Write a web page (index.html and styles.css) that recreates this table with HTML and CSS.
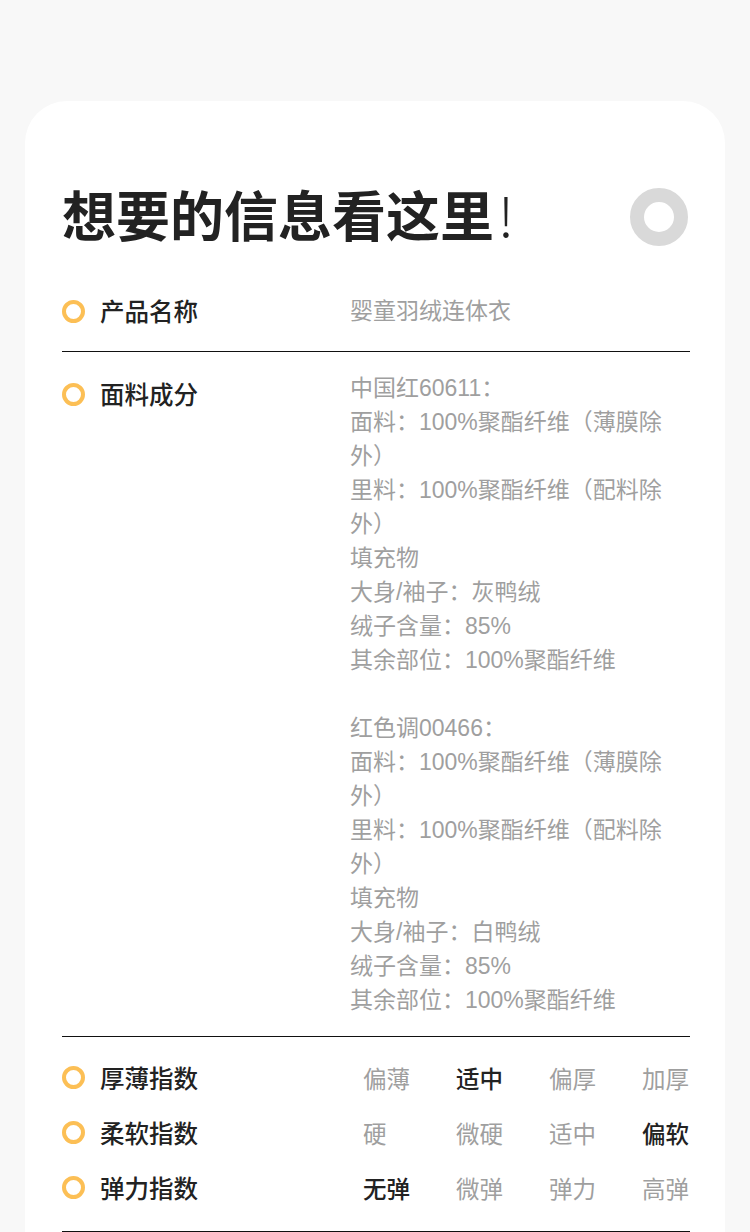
FILE: index.html
```html
<!DOCTYPE html>
<html lang="zh-CN">
<head>
<meta charset="utf-8">
<title>想要的信息看这里</title>
<link rel="stylesheet" href="styles.css">
</head>
<body>
<div class="page">
  <section class="card">
    <header class="card-head">
      <h1 class="title">想要的信息看这里<span class="bang">!</span></h1>
      <span class="deco-ring"></span>
    </header>

    <div class="row row-first">
      <div class="label"><span class="dot"></span>产品名称</div>
      <div class="value">婴童羽绒连体衣</div>
    </div>

    <div class="row row-fabric">
      <div class="label"><span class="dot"></span>面料成分</div>
      <div class="value">
        <p>中国红60611：</p>
        <p>面料：100%聚酯纤维（薄膜除外）</p>
        <p>里料：100%聚酯纤维（配料除外）</p>
        <p>填充物</p>
        <p>大身/袖子：灰鸭绒</p>
        <p>绒子含量：85%</p>
        <p>其余部位：100%聚酯纤维</p>
        <p class="blank">&nbsp;</p>
        <p>红色调00466：</p>
        <p>面料：100%聚酯纤维（薄膜除外）</p>
        <p>里料：100%聚酯纤维（配料除外）</p>
        <p>填充物</p>
        <p>大身/袖子：白鸭绒</p>
        <p>绒子含量：85%</p>
        <p>其余部位：100%聚酯纤维</p>
      </div>
    </div>

    <div class="indexes">
      <div class="index-row">
        <div class="label"><span class="dot"></span>厚薄指数</div>
        <div class="options">
          <span class="opt">偏薄</span>
          <span class="opt on">适中</span>
          <span class="opt">偏厚</span>
          <span class="opt">加厚</span>
        </div>
      </div>
      <div class="index-row">
        <div class="label"><span class="dot"></span>柔软指数</div>
        <div class="options">
          <span class="opt">硬</span>
          <span class="opt">微硬</span>
          <span class="opt">适中</span>
          <span class="opt on">偏软</span>
        </div>
      </div>
      <div class="index-row">
        <div class="label"><span class="dot"></span>弹力指数</div>
        <div class="options">
          <span class="opt on">无弹</span>
          <span class="opt">微弹</span>
          <span class="opt">弹力</span>
          <span class="opt">高弹</span>
        </div>
      </div>
    </div>
  </section>
</div>
</body>
</html>
```

FILE: styles.css
```css
* { box-sizing: border-box; }

html, body {
  margin: 0;
  padding: 0;
  background: #f8f8f8;
  font-family: "Liberation Sans", "Noto Sans CJK SC", sans-serif;
  color: #222;
}

.page {
  padding: 101px 25px 0 25px;
  height: 1232px;
  overflow: hidden;
}

.card {
  background: #fff;
  border-radius: 42px 42px 0 0;
  padding: 83px 35px 40px 37px;
  min-height: 1200px;
}

.card-head {
  display: flex;
  align-items: center;
  justify-content: space-between;
  height: 60px;
}

.title {
  margin: 0;
  font-size: 54px;
  line-height: 60px;
  font-weight: 700;
  color: #222;
  font-family: "Noto Sans CJK SC", sans-serif;
  letter-spacing: 0;
}

.bang {
  font-family: "Noto Sans CJK SC", sans-serif;
  font-weight: 300;
  margin-left: 4px;
}

.deco-ring {
  width: 58px;
  height: 58px;
  border-radius: 50%;
  border: 14px solid #d9d9d9;
  margin-top: 6px;
  margin-right: 2px;
}

.row {
  display: flex;
  align-items: flex-start;
  border-bottom: 1px solid #111;
}

.row-first {
  align-items: center;
  margin-top: 44px;
  padding-bottom: 17px;
}

.row-fabric {
  padding: 19px 0 19px 0;
}

.label {
  width: 288px;
  flex: none;
  display: flex;
  align-items: center;
  font-size: 24.5px;
  line-height: 46px;
  font-weight: 500;
  color: #222;
  font-family: "Noto Sans CJK SC", sans-serif;
}

.dot {
  width: 23px;
  height: 23px;
  border-radius: 50%;
  border: 4px solid #fcbf55;
  margin-right: 15px;
  flex: none;
}

.value {
  width: 325px;
  font-size: 23px;
  line-height: 34px;
  color: #9f9f9f;
}

.value p {
  margin: 0;
}

.indexes {
  padding: 13px 0 16px 0;
  border-bottom: 1px solid #111;
}

.index-row {
  display: flex;
  align-items: center;
  height: 55px;
}

.options {
  flex: 1;
  display: flex;
  justify-content: space-between;
  padding-left: 13px;
}

.opt {
  width: 48px;
  font-size: 23.5px;
  line-height: 34px;
  color: #9f9f9f;
  font-family: "Noto Sans CJK SC", sans-serif;
  white-space: nowrap;
}

.opt.on {
  color: #222;
  font-weight: 500;
}
```
